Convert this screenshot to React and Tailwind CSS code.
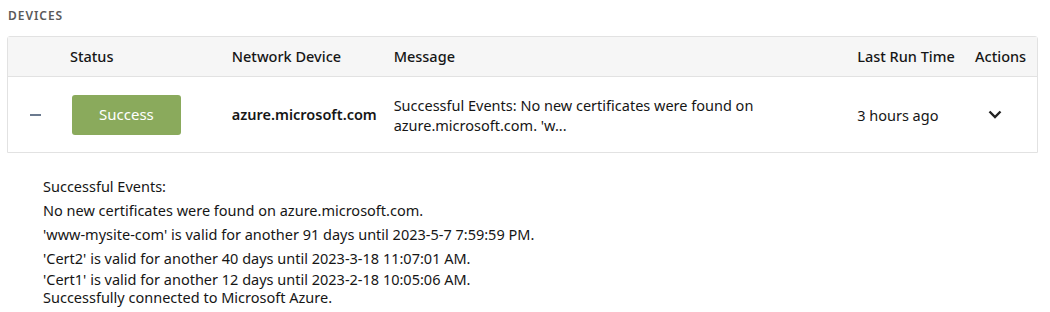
import React from "react";

// column widths taken from the header text positions
const cols = ["w-[54px]", "w-[162px]", "w-[162px]", "w-[464px]", "w-[118px]", "w-[70px]"];

const details = [
  { text: "Successful Events:", cls: "leading-[24px]" },
  { text: "No new certificates were found on azure.microsoft.com.", cls: "leading-[24px]" },
  { text: "'www-mysite-com' is valid for another 91 days until 2023-5-7 7:59:59 PM.", cls: "leading-[24px]" },
  { text: "'Cert2' is valid for another 40 days until 2023-3-18 11:07:01 AM.", cls: "leading-[24px]" },
  { text: "'Cert1' is valid for another 12 days until 2023-2-18 10:05:06 AM.", cls: "leading-[18px]" },
  { text: "Successfully connected to Microsoft Azure.", cls: "leading-[18px]" },
];

export default function App() {
  return (
    <div className="w-[1050px] h-[312px] bg-white text-[#161616] font-['Noto_Sans',sans-serif] text-[14.5px]">
      <div className="pl-[8px] pt-[7px] h-[36px] text-[12px] font-semibold tracking-[0.08em] text-[#5a5a5a]">
        DEVICES
      </div>

      <div className="ml-[7px] w-[1031px] border border-[#e2e2e2] rounded-t-[3px]">
        {/* header */}
        <div className="flex h-[40px] items-center bg-[#f6f6f6] border-b border-[#e2e2e2] font-medium">
          <div className={cols[0]}></div>
          <div className={`${cols[1]} px-2`}>Status</div>
          <div className={`${cols[2]} px-2`}>Network Device</div>
          <div className={`${cols[3]} px-2`}>Message</div>
          <div className={`${cols[4]} px-2`}>Last Run Time</div>
          <div className={`${cols[5]} px-2`}>Actions</div>
        </div>

        {/* row */}
        <div className="flex h-[75px] items-center">
          <div className={`${cols[0]} flex justify-center pl-[1px]`}>
            <div className="w-[11px] h-[2px] bg-[#6b7a8f]"></div>
          </div>
          <div className={`${cols[1]} px-2`}>
            <button className="w-[109px] h-[40px] ml-[2px] rounded-[3px] bg-[#8aaa5c] text-white text-[15px]">
              Success
            </button>
          </div>
          <div className={`${cols[2]} px-2 font-semibold`}>azure.microsoft.com</div>
          <div className={`${cols[3]} px-2 leading-[20px] pr-6`}>
            Successful Events: No new certificates were found on azure.microsoft.com. 'w...
          </div>
          <div className={`${cols[4]} px-2 pt-[3px]`}>3 hours ago</div>
          <div className={`${cols[5]} flex pl-[21px]`}>
            <svg width="14" height="9" viewBox="0 0 14 9" fill="none">
              <path d="M1.5 1.5 L7 7 L12.5 1.5" stroke="#222" strokeWidth="2.4" />
            </svg>
          </div>
        </div>
      </div>

      <div className="pl-[43px] pt-[21px]">
        {details.map((d, i) => (
          <div key={i} className={d.cls}>{d.text}</div>
        ))}
      </div>
    </div>
  );
}
